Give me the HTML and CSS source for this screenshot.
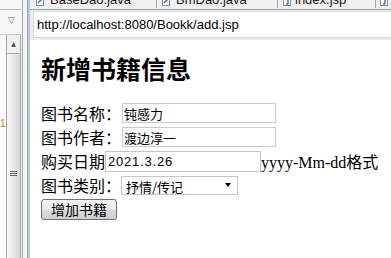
FILE: index.html
```html
<!DOCTYPE html>
<html lang="zh-CN">
<head>
    <meta charset="UTF-8">
    <title>add.jsp</title>
    <link rel="stylesheet" href="styles.css">
</head>
<body>
    <div class="ide">
        <div class="gutter">
            <div class="gutter-left">
                <div class="gutter-top"></div>
                <div class="gutter-menu">&#9661;</div>
                <div class="gutter-body">
                    <div class="ruler"><span class="line-no">1</span></div>
                    <div class="scrollbar">
                        <div class="scroll-up">&#9650;</div>
                        <div class="scroll-thumb"><span class="grip"></span></div>
                    </div>
                </div>
            </div>
            <div class="gutter-edge"></div>
        </div>
        <div class="main">
            <div class="tabs">
                <div class="tab-row">
                    <div class="tab tab-1">
                        <svg class="file-icon" width="8" height="9" viewBox="0 0 8 9"><rect x="0.5" y="0.5" width="7" height="8" fill="#fff" stroke="#7d8ea8"/><path d="M2 6 L6 2" stroke="#3d6fb6" stroke-width="1.4"/></svg>
                        BaseDao.java
                    </div>
                    <div class="tab tab-2">
                        <svg class="file-icon" width="8" height="9" viewBox="0 0 8 9"><rect x="0.5" y="0.5" width="7" height="8" fill="#fff" stroke="#7d8ea8"/><path d="M2 6 L6 2" stroke="#3d6fb6" stroke-width="1.4"/></svg>
                        BmDao.java
                    </div>
                    <div class="tab tab-3">
                        <svg class="file-icon" width="8" height="9" viewBox="0 0 8 9"><rect x="0.5" y="0.5" width="7" height="8" fill="#fff" stroke="#7d8ea8"/><path d="M5 2 V6 Q5 7.5 3 7" stroke="#2c4f86" stroke-width="1.2" fill="none"/></svg>
                        index.jsp
                    </div>
                    <div class="tab tab-4">
                        <svg class="file-icon" width="8" height="9" viewBox="0 0 8 9"><rect x="0.5" y="0.5" width="7" height="8" fill="#fff" stroke="#7d8ea8"/><path d="M5 2 V6 Q5 7.5 3 7" stroke="#2c4f86" stroke-width="1.2" fill="none"/></svg>
                    </div>
                </div>
            </div>
            <div class="urlbar">
                <div class="url">http://localhost:8080/Bookk/add.jsp</div>
            </div>
            <div class="page">
                <h1>新增书籍信息</h1>
                <form class="book-form">
                    <div class="row">
                        <label>图书名称：</label>
                        <input class="text-input" type="text" value="钝感力">
                    </div>
                    <div class="row">
                        <label>图书作者：</label>
                        <input class="text-input" type="text" value="渡边淳一">
                    </div>
                    <div class="row">
                        <label>购买日期</label>
                        <input class="date-input" type="text" value="2021.3.26">
                        <span class="hint">yyyy-Mm-dd<span class="cjk">格式</span></span>
                    </div>
                    <div class="row">
                        <label>图书类别：</label>
                        <span class="select-box">
                            <select class="select">
                                <option>抒情/传记</option>
                            </select>
                            <span class="select-arrow"></span>
                        </span>
                    </div>
                    <div class="row">
                        <button type="button" class="button">增加书籍</button>
                    </div>
                </form>
            </div>
        </div>
    </div>
</body>
</html>
```

FILE: styles.css
```css
body, html {
    margin: 0;
    padding: 0;
    background-color: #fff;
    font-family: "Noto Sans CJK SC", sans-serif;
    color: #000;
}
.ide {
    display: flex;
    width: 391px;
    height: 258px;
    overflow: hidden;
}

/* left editor gutter */
.gutter {
    width: 30px;
    flex: none;
    display: flex;
    background-color: #f5f5f5;
}
.gutter-left {
    width: 21px;
    display: flex;
    flex-direction: column;
}
.gutter-top {
    height: 10px;
    box-sizing: border-box;
    border-bottom: 1px solid #b9b9b9;
}
.gutter-menu {
    height: 25px;
    box-sizing: border-box;
    border-bottom: 1px solid #c9c9c9;
    padding-left: 8px;
    font-family: "DejaVu Sans", sans-serif;
    font-size: 9px;
    line-height: 20px;
    color: #707070;
}
.gutter-body {
    flex: 1;
    display: flex;
}
.ruler {
    width: 6px;
    background-color: #fafafa;
}
.line-no {
    display: block;
    margin-top: 83px;
    font-family: "Liberation Sans", sans-serif;
    font-size: 10px;
    color: #c08a2c;
}
.scrollbar {
    width: 15px;
    box-sizing: border-box;
    display: flex;
    flex-direction: column;
    border-left: 1px solid #a4a4a4;
    border-right: 1px solid #a4a4a4;
}
.scroll-up {
    height: 18px;
    background-color: #f0f0f0;
    font-family: "DejaVu Sans", sans-serif;
    font-size: 6px;
    line-height: 18px;
    text-align: center;
    color: #404040;
}
.scroll-thumb {
    flex: 1;
    border-top: 1px solid #a8a8a8;
    border-radius: 2px 2px 0 0;
    background: linear-gradient(to right, #fbfbfb, #e9e9e9 50%, #d6d6d6);
}
.grip {
    display: block;
    width: 7px;
    height: 1px;
    margin: 117px 0 0 3px;
    background-color: #666;
    box-shadow: 0 2px 0 #666, 0 4px 0 #666;
}
.gutter-edge {
    flex: 1;
    background: linear-gradient(to right, #f2f2f2 0 1px, #a8a8a8 1px 2px, #f4f4f4 2px 6px, #a2a2a2 6px 7px, #fafafa 7px 7.5px, #b6c8db 7.5px 9px);
}

/* browser area */
.main {
    flex: 1;
    display: flex;
    flex-direction: column;
    min-width: 0;
}
.tabs {
    height: 10px;
    box-sizing: border-box;
    overflow: hidden;
    background-color: #f0f0f0;
    border-bottom: 1px solid #a0a0a0;
}
.tab-row {
    display: flex;
    margin-top: -9px;
}
.tab {
    height: 17px;
    box-sizing: border-box;
    flex: none;
    display: flex;
    align-items: center;
    gap: 6px;
    padding-left: 5px;
    border-right: 1px solid #a4a4a4;
    font-family: "Liberation Sans", sans-serif;
    font-size: 13px;
    color: #1a1a1a;
    white-space: nowrap;
}
.tab-1 { width: 127px; padding-left: 6px; }
.tab-2 { width: 121px; }
.tab-3 { width: 98px; gap: 4px; }
.tab-4 { border-right: none; padding-left: 4px; }
.file-icon {
    flex: none;
    margin-top: 4px;
}
.urlbar {
    height: 30px;
    box-sizing: border-box;
    padding: 1px 0 2px 3px;
    background-color: #e8edf2;
}
.url {
    height: 100%;
    box-sizing: border-box;
    padding: 0 3px;
    background-color: #fff;
    border: 1px solid #d5dce4;
    border-right: none;
    font-family: "Liberation Sans", sans-serif;
    font-size: 13px;
    line-height: 25px;
}

/* the jsp page itself */
.page {
    flex: 1;
    padding: 8px 0 0 11px;
}
h1 {
    margin: 5px 0 18px;
    font-size: 25px;
    line-height: 30px;
    font-weight: 600;
}
.row {
    display: flex;
    align-items: center;
    height: 24px;
    font-size: 16px;
    white-space: nowrap;
}
.row label {
    line-height: 24px;
}
.text-input {
    width: 154px;
    height: 20px;
    box-sizing: border-box;
    margin: 0 0 0 1px;
    padding: 0 1px;
    border: 1px solid #cbcbcb;
    font-family: "Noto Sans CJK SC", sans-serif;
    font-size: 13px;
    color: #000;
    outline: none;
}
.date-input {
    width: 156px;
    height: 21px;
    box-sizing: border-box;
    margin: 0;
    padding: 0 2px;
    border: 1px solid #c4c4c4;
    font-family: "Liberation Sans", sans-serif;
    font-size: 13px;
    letter-spacing: 0.8px;
    color: #000;
    outline: none;
}
.hint {
    font-family: "Liberation Serif", serif;
    font-size: 16px;
}
.hint .cjk {
    font-family: "Noto Sans CJK SC", sans-serif;
}
.select-box {
    display: inline-flex;
    align-items: center;
    width: 117px;
    height: 19px;
    box-sizing: border-box;
    margin-left: 0;
    border: 1px solid #c6c6c6;
    background-color: #fff;
}
.select {
    flex: 1;
    min-width: 0;
    height: 100%;
    padding: 0 0 0 4px;
    border: none;
    background: transparent;
    appearance: none;
    -webkit-appearance: none;
    font-family: "Noto Sans CJK SC", sans-serif;
    font-size: 13px;
    color: #000;
    outline: none;
}
.select-arrow {
    width: 0;
    height: 0;
    margin-right: 6px;
    border-left: 3px solid transparent;
    border-right: 3px solid transparent;
    border-top: 4px solid #000;
}
.button {
    width: 76px;
    height: 21px;
    margin-top: 1px;
    padding: 0;
    border: 1px solid #707070;
    border-radius: 3px;
    background: linear-gradient(#f3f3f3, #ebebeb 48%, #dddddd 52%, #cfcfcf);
    font-family: "Noto Sans CJK SC", sans-serif;
    font-size: 14px;
    line-height: 19px;
    color: #000;
}
```
